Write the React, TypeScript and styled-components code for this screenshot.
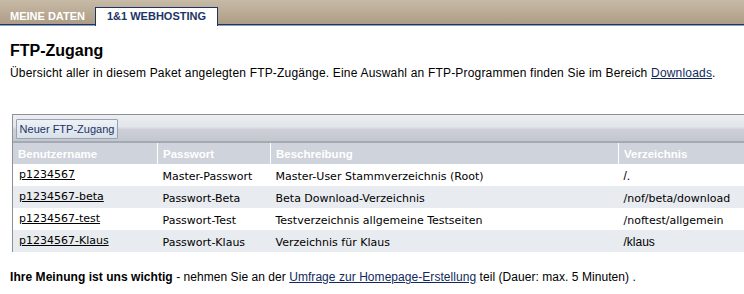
import React from "react";
import styled, { createGlobalStyle } from "styled-components";

const Global = createGlobalStyle`
  html, body { margin: 0; padding: 0; background: #fff; }
  body { font-family: "Liberation Sans", Arial, sans-serif; font-size: 12px; color: #000; overflow: hidden; }
`;

const Page = styled.div`
  width: 744px;
  height: 294px;
  overflow: hidden;
`;

const TabBar = styled.div`
  height: 24px;
  display: flex;
  align-items: flex-end;
  background: linear-gradient(#c7baa6, #ae9d86);
  border-bottom: 1px solid #1d3566;
  box-shadow: 0 1px 0 #8fa0bc;
`;

const Tab = styled.div<{ $active?: boolean }>`
  height: 19px;
  display: flex;
  align-items: center;
  justify-content: center;
  font-family: "Liberation Sans", Arial, sans-serif;
  font-weight: bold;
  font-size: 11px;
  box-sizing: border-box;
  width: ${(p) => (p.$active ? "123px" : "95px")};
  color: ${(p) => (p.$active ? "#1d3566" : "#fff")};
  background: ${(p) => (p.$active ? "#fff" : "transparent")};
  border: ${(p) => (p.$active ? "1px solid #1d3566" : "none")};
  border-bottom: none;
  margin-bottom: ${(p) => (p.$active ? "-2px" : "0")};
  position: relative;
  padding-top: ${(p) => (p.$active ? "0" : "2px")};
  padding-bottom: ${(p) => (p.$active ? "2px" : "0")};
`;

const Content = styled.div`
  padding: 16px 0 0 10px;
`;

const Title = styled.h1`
  margin: 0;
  font-size: 16px;
  font-weight: bold;
  line-height: 20px;
  color: #000;
`;

const Lead = styled.p`
  margin: 5px 0 0;
  font-size: 12px;
  line-height: 15px;
  letter-spacing: 0.19px;
`;

const Link = styled.a`
  color: #0f2a5e;
  text-decoration: underline;
`;

const Panel = styled.div`
  margin: 33px 0 0 2px;
  border-top: 1px solid #8e9096;
  border-left: 1px solid #8e9096;
`;

const Toolbar = styled.div`
  height: 26px;
  display: flex;
  align-items: center;
  padding-left: 3px;
  background: linear-gradient(#eceef1 0%, #e2e5e9 45%, #cdd1d7 55%, #c3c7ce 100%);
  border-bottom: 2px solid #a5a9b1;
`;

const Button = styled.button`
  height: 20px;
  width: 102px;
  padding: 0;
  font-family: "Liberation Sans", Arial, sans-serif;
  font-size: 11px;
  color: #1a3366;
  background: linear-gradient(#eef2f6, #d9e0e8);
  border: 1px solid #97a3b5;
  border-radius: 1px;
  margin-top: 1px;
`;

const Table = styled.table`
  border-collapse: collapse;
  width: 732px;
  table-layout: fixed;
`;

const Th = styled.th<{ $w: number }>`
  width: ${(p) => p.$w}px;
  height: 21px;
  padding: 0 0 0 5px;
  text-align: left;
  background: #cfd3db;
  color: #fff;
  font-family: "Liberation Sans", Arial, sans-serif;
  font-size: 11.5px;
  font-weight: bold;
  border-left: 1px solid #fff;
  &:first-child { border-left: none; }
`;

const Tr = styled.tr<{ $alt?: boolean }>`
  background: ${(p) => (p.$alt ? "#e8ebef" : "#fff")};
`;

const Td = styled.td<{ $arial?: boolean }>`
  height: 22px;
  box-sizing: border-box;
  padding: 2px 0 0 5px;
  font-family: ${(p) => (p.$arial ? '"Liberation Sans", Arial, sans-serif' : '"DejaVu Sans", Verdana, sans-serif')};
  font-size: ${(p) => (p.$arial ? "12px" : "11px")};
  white-space: nowrap;
  overflow: hidden;
  &:first-child { padding: 0 0 2px 6px; }
`;

const UserLink = styled.a`
  color: #000;
  text-decoration: underline;
`;

const Footer = styled.p`
  margin: 18px 0 0 10px;
  font-size: 12px;
  line-height: 15px;
  letter-spacing: 0.05px;
`;

const rows = [
  ["p1234567", "Master-Passwort", "Master-User Stammverzeichnis (Root)", "/."],
  ["p1234567-beta", "Passwort-Beta", "Beta Download-Verzeichnis", "/nof/beta/download"],
  ["p1234567-test", "Passwort-Test", "Testverzeichnis allgemeine Testseiten", "/noftest/allgemein"],
  ["p1234567-Klaus", "Passwort-Klaus", "Verzeichnis für Klaus", "/klaus"],
];

export default function App() {
  return (
    <Page>
      <Global />
      <TabBar>
        <Tab>MEINE DATEN</Tab>
        <Tab $active>1&amp;1 WEBHOSTING</Tab>
      </TabBar>
      <Content>
        <Title>FTP-Zugang</Title>
        <Lead>
          Übersicht aller in diesem Paket angelegten FTP-Zugänge. Eine Auswahl an FTP-Programmen finden Sie im Bereich{" "}
          <Link href="#">Downloads</Link>.
        </Lead>
        <Panel>
          <Toolbar>
            <Button>Neuer FTP-Zugang</Button>
          </Toolbar>
          <Table>
            <thead>
              <tr>
                <Th $w={139}>Benutzername</Th>
                <Th $w={107}>Passwort</Th>
                <Th $w={342}>Beschreibung</Th>
                <Th $w={139}>Verzeichnis</Th>
              </tr>
            </thead>
            <tbody>
              {rows.map((r, i) => (
                <Tr key={r[0]} $alt={i % 2 === 1}>
                  <Td>
                    <UserLink href="#">{r[0]}</UserLink>
                  </Td>
                  <Td>{r[1]}</Td>
                  <Td>{r[2]}</Td>
                  <Td $arial={i === 0 || i === 3}>{r[3]}</Td>
                </Tr>
              ))}
            </tbody>
          </Table>
        </Panel>
      </Content>
      <Footer>
        <b>Ihre Meinung ist uns wichtig</b> - nehmen Sie an der <Link href="#">Umfrage zur Homepage-Erstellung</Link> teil
        (Dauer: max. 5 Minuten) .
      </Footer>
    </Page>
  );
}
